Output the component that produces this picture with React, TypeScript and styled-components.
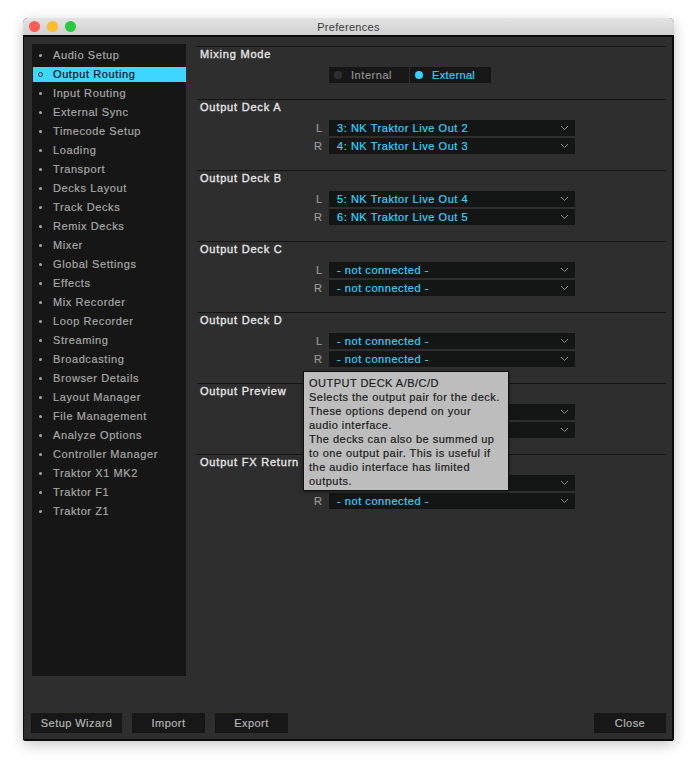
import styled, { createGlobalStyle } from "styled-components"

const GlobalStyle = createGlobalStyle`
  html, body {
    margin: 0;
    padding: 0;
    background: #ffffff;
  }
  body {
    font-family: "Liberation Sans", Arial, sans-serif;
  }
`

const Page = styled.div`
  width: 697px;
  height: 768px;
  padding: 18px 23px 0;
  box-sizing: border-box;
`

const Window = styled.div`
  position: relative;
  width: 651px;
  height: 723px;
  display: flex;
  flex-direction: column;
  border-radius: 5px 5px 3px 3px;
  overflow: hidden;
  background: #2e2e2e;
  box-shadow: 0 4px 14px rgba(0, 0, 0, 0.22);
`

const TitleBar = styled.div`
  position: relative;
  height: 17px;
  flex: none;
  display: flex;
  align-items: center;
  justify-content: center;
  background: linear-gradient(#e4e4e4, #cfcfcf);
  border-bottom: 2px solid #0c0c0c;
  font-size: 11px;
  letter-spacing: 0.3px;
  color: #3c3c3c;
`

const Lights = styled.div`
  position: absolute;
  left: 6px;
  top: 3px;
  display: flex;
  gap: 7px;
`

const Light = styled.span<{ $color: string }>`
  width: 11px;
  height: 11px;
  border-radius: 50%;
  background: ${(p) => p.$color};
`

const Body = styled.div`
  flex: 1;
  display: flex;
  flex-direction: column;
  padding: 7px 6px 6px 8px;
  border-left: 1px solid #0c0c0c;
  border-right: 2px solid #0c0c0c;
  border-bottom: 2px solid #0c0c0c;
  min-height: 0;
`

const Main = styled.div`
  display: flex;
  height: 632px;
  flex: none;
`

const Sidebar = styled.ul`
  width: 154px;
  flex: none;
  display: flex;
  flex-direction: column;
  gap: 4px;
  margin: 0;
  padding: 4px 0 0 1px;
  box-sizing: border-box;
  list-style: none;
  background: #161616;
`

const SideItem = styled.li<{ $active?: boolean }>`
  height: 15px;
  padding-bottom: 1px;
  box-sizing: border-box;
  display: flex;
  align-items: center;
  background: ${(p) => (p.$active ? "#3fd6ff" : "transparent")};
  color: ${(p) => (p.$active ? "#111111" : "#a6a6a6")};
  font-size: 11px;
  letter-spacing: 0.6px;
  -webkit-text-stroke: 0.2px;
  white-space: nowrap;
`

const Bullet = styled.span<{ $active?: boolean }>`
  width: ${(p) => (p.$active ? "5px" : "3px")};
  height: ${(p) => (p.$active ? "5px" : "3px")};
  margin-left: ${(p) => (p.$active ? "5px" : "6px")};
  margin-right: ${(p) => (p.$active ? "10px" : "11px")};
  box-sizing: border-box;
  border-radius: 50%;
  background: ${(p) => (p.$active ? "transparent" : "#a6a6a6")};
  border: ${(p) => (p.$active ? "1.5px solid #333" : "none")};
`

const Content = styled.div`
  flex: 1;
  padding: 2px 0 0 11px;
  min-width: 0;
`

const Section = styled.section<{ $first?: boolean }>`
  height: ${(p) => (p.$first ? "53px" : "71px")};
  box-sizing: border-box;
  border-top: 1px solid #151515;
`

const SectionTitle = styled.div`
  height: 16px;
  padding-left: 3px;
  font-size: 11px;
  line-height: 14px;
  letter-spacing: 0.8px;
  -webkit-text-stroke: 0.35px;
  color: #e4e4e4;
`

const Row = styled.div`
  display: flex;
  align-items: center;
  height: 16px;
  margin-bottom: 2px;
`

const FirstRow = styled(Row)`
  margin-top: 4px;
`

const Channel = styled.span`
  width: 132px;
  padding-right: 7px;
  box-sizing: border-box;
  text-align: right;
  font-size: 11px;
  -webkit-text-stroke: 0.2px;
  color: #9a9a9a;
`

const Select = styled.div`
  width: 246px;
  height: 16px;
  padding: 0 6px 0 8px;
  box-sizing: border-box;
  display: flex;
  align-items: center;
  justify-content: space-between;
  background: #141616;
  color: #3ad0fa;
  font-size: 11px;
  letter-spacing: 0.55px;
  -webkit-text-stroke: 0.2px;
  white-space: nowrap;
`

const Chevron = () => (
  <svg width="9" height="6" viewBox="0 0 9 6" fill="none">
    <path d="M1 1l3.5 3.5L8 1" stroke="#8a8a8a" strokeWidth="1" />
  </svg>
)

const ModeRow = styled.div`
  display: flex;
  gap: 1px;
  margin: 4px 0 0 132px;
`

const ModeButton = styled.div<{ $on?: boolean }>`
  width: ${(p) => (p.$on ? "81px" : "80px")};
  height: 16px;
  box-sizing: border-box;
  padding-left: 5px;
  display: flex;
  align-items: center;
  gap: 9px;
  background: #171717;
  color: ${(p) => (p.$on ? "#3ad0fa" : "#8f8f8f")};
  font-size: 11px;
  letter-spacing: ${(p) => (p.$on ? "0.35px" : "0.55px")};
  -webkit-text-stroke: 0.2px;
`

const Dot = styled.span<{ $on?: boolean }>`
  width: 8px;
  height: 8px;
  border-radius: 50%;
  background: ${(p) => (p.$on ? "#3ad0fa" : "#2e2e2e")};
`

const Footer = styled.div`
  display: flex;
  align-items: center;
  gap: 10px;
  margin-top: 37px;
  margin-left: -1px;
`

const FooterButton = styled.button<{ $width: number; $right?: boolean }>`
  width: ${(p) => p.$width}px;
  height: 20px;
  padding: 0;
  margin-left: ${(p) => (p.$right ? "auto" : "0")};
  border: none;
  background: #171717;
  color: #b4b4b4;
  font-family: inherit;
  font-size: 11px;
  letter-spacing: 0.45px;
  -webkit-text-stroke: 0.2px;
`

const Tooltip = styled.div`
  position: absolute;
  left: 280px;
  top: 353px;
  width: 206px;
  height: 120px;
  box-sizing: border-box;
  padding: 4px 5px;
  background: #bdbdbd;
  border: 1px solid #111111;
  box-shadow: 0 1px 3px rgba(0, 0, 0, 0.4);
  color: #1c1c1c;
  font-size: 11px;
  line-height: 14px;
  letter-spacing: 0.48px;
  -webkit-text-stroke: 0.2px;
  white-space: nowrap;
`

const sideItems = [
  "Audio Setup",
  "Output Routing",
  "Input Routing",
  "External Sync",
  "Timecode Setup",
  "Loading",
  "Transport",
  "Decks Layout",
  "Track Decks",
  "Remix Decks",
  "Mixer",
  "Global Settings",
  "Effects",
  "Mix Recorder",
  "Loop Recorder",
  "Streaming",
  "Broadcasting",
  "Browser Details",
  "Layout Manager",
  "File Management",
  "Analyze Options",
  "Controller Manager",
  "Traktor X1 MK2",
  "Traktor F1",
  "Traktor Z1",
]

const outputs = [
  { title: "Output Deck A", left: "3: NK Traktor Live Out 2", right: "4: NK Traktor Live Out 3" },
  { title: "Output Deck B", left: "5: NK Traktor Live Out 4", right: "6: NK Traktor Live Out 5" },
  { title: "Output Deck C", left: "- not connected -", right: "- not connected -" },
  { title: "Output Deck D", left: "- not connected -", right: "- not connected -" },
  { title: "Output Preview", left: "- not connected -", right: "- not connected -" },
  { title: "Output FX Return", left: "- not connected -", right: "- not connected -" },
]

const tooltipLines = [
  "OUTPUT DECK A/B/C/D",
  "Selects the output pair for the deck.",
  "These options depend on your",
  "audio interface.",
  "The decks can also be summed up",
  "to one output pair. This is useful if",
  "the audio interface has limited",
  "outputs.",
]

function App() {
  return (
    <Page>
      <GlobalStyle />
      <Window>
        <TitleBar>
          <Lights>
            <Light $color="#fc5b57" />
            <Light $color="#fdbb2e" />
            <Light $color="#29c840" />
          </Lights>
          Preferences
        </TitleBar>
        <Body>
          <Main>
            <Sidebar>
              {sideItems.map((item) => {
                const active = item === "Output Routing"
                return (
                  <SideItem key={item} $active={active}>
                    <Bullet $active={active} />
                    {item}
                  </SideItem>
                )
              })}
            </Sidebar>
            <Content>
              <Section $first>
                <SectionTitle>Mixing Mode</SectionTitle>
                <ModeRow>
                  <ModeButton>
                    <Dot />
                    Internal
                  </ModeButton>
                  <ModeButton $on>
                    <Dot $on />
                    External
                  </ModeButton>
                </ModeRow>
              </Section>
              {outputs.map((output) => (
                <Section key={output.title}>
                  <SectionTitle>{output.title}</SectionTitle>
                  <FirstRow>
                    <Channel>L</Channel>
                    <Select>
                      {output.left}
                      <Chevron />
                    </Select>
                  </FirstRow>
                  <Row>
                    <Channel>R</Channel>
                    <Select>
                      {output.right}
                      <Chevron />
                    </Select>
                  </Row>
                </Section>
              ))}
            </Content>
          </Main>
          <Footer>
            <FooterButton $width={91}>Setup Wizard</FooterButton>
            <FooterButton $width={73}>Import</FooterButton>
            <FooterButton $width={73}>Export</FooterButton>
            <FooterButton $width={72} $right>
              Close
            </FooterButton>
          </Footer>
        </Body>
        <Tooltip>
          {tooltipLines.map((line) => (
            <div key={line}>{line}</div>
          ))}
        </Tooltip>
      </Window>
    </Page>
  )
}

export default App
